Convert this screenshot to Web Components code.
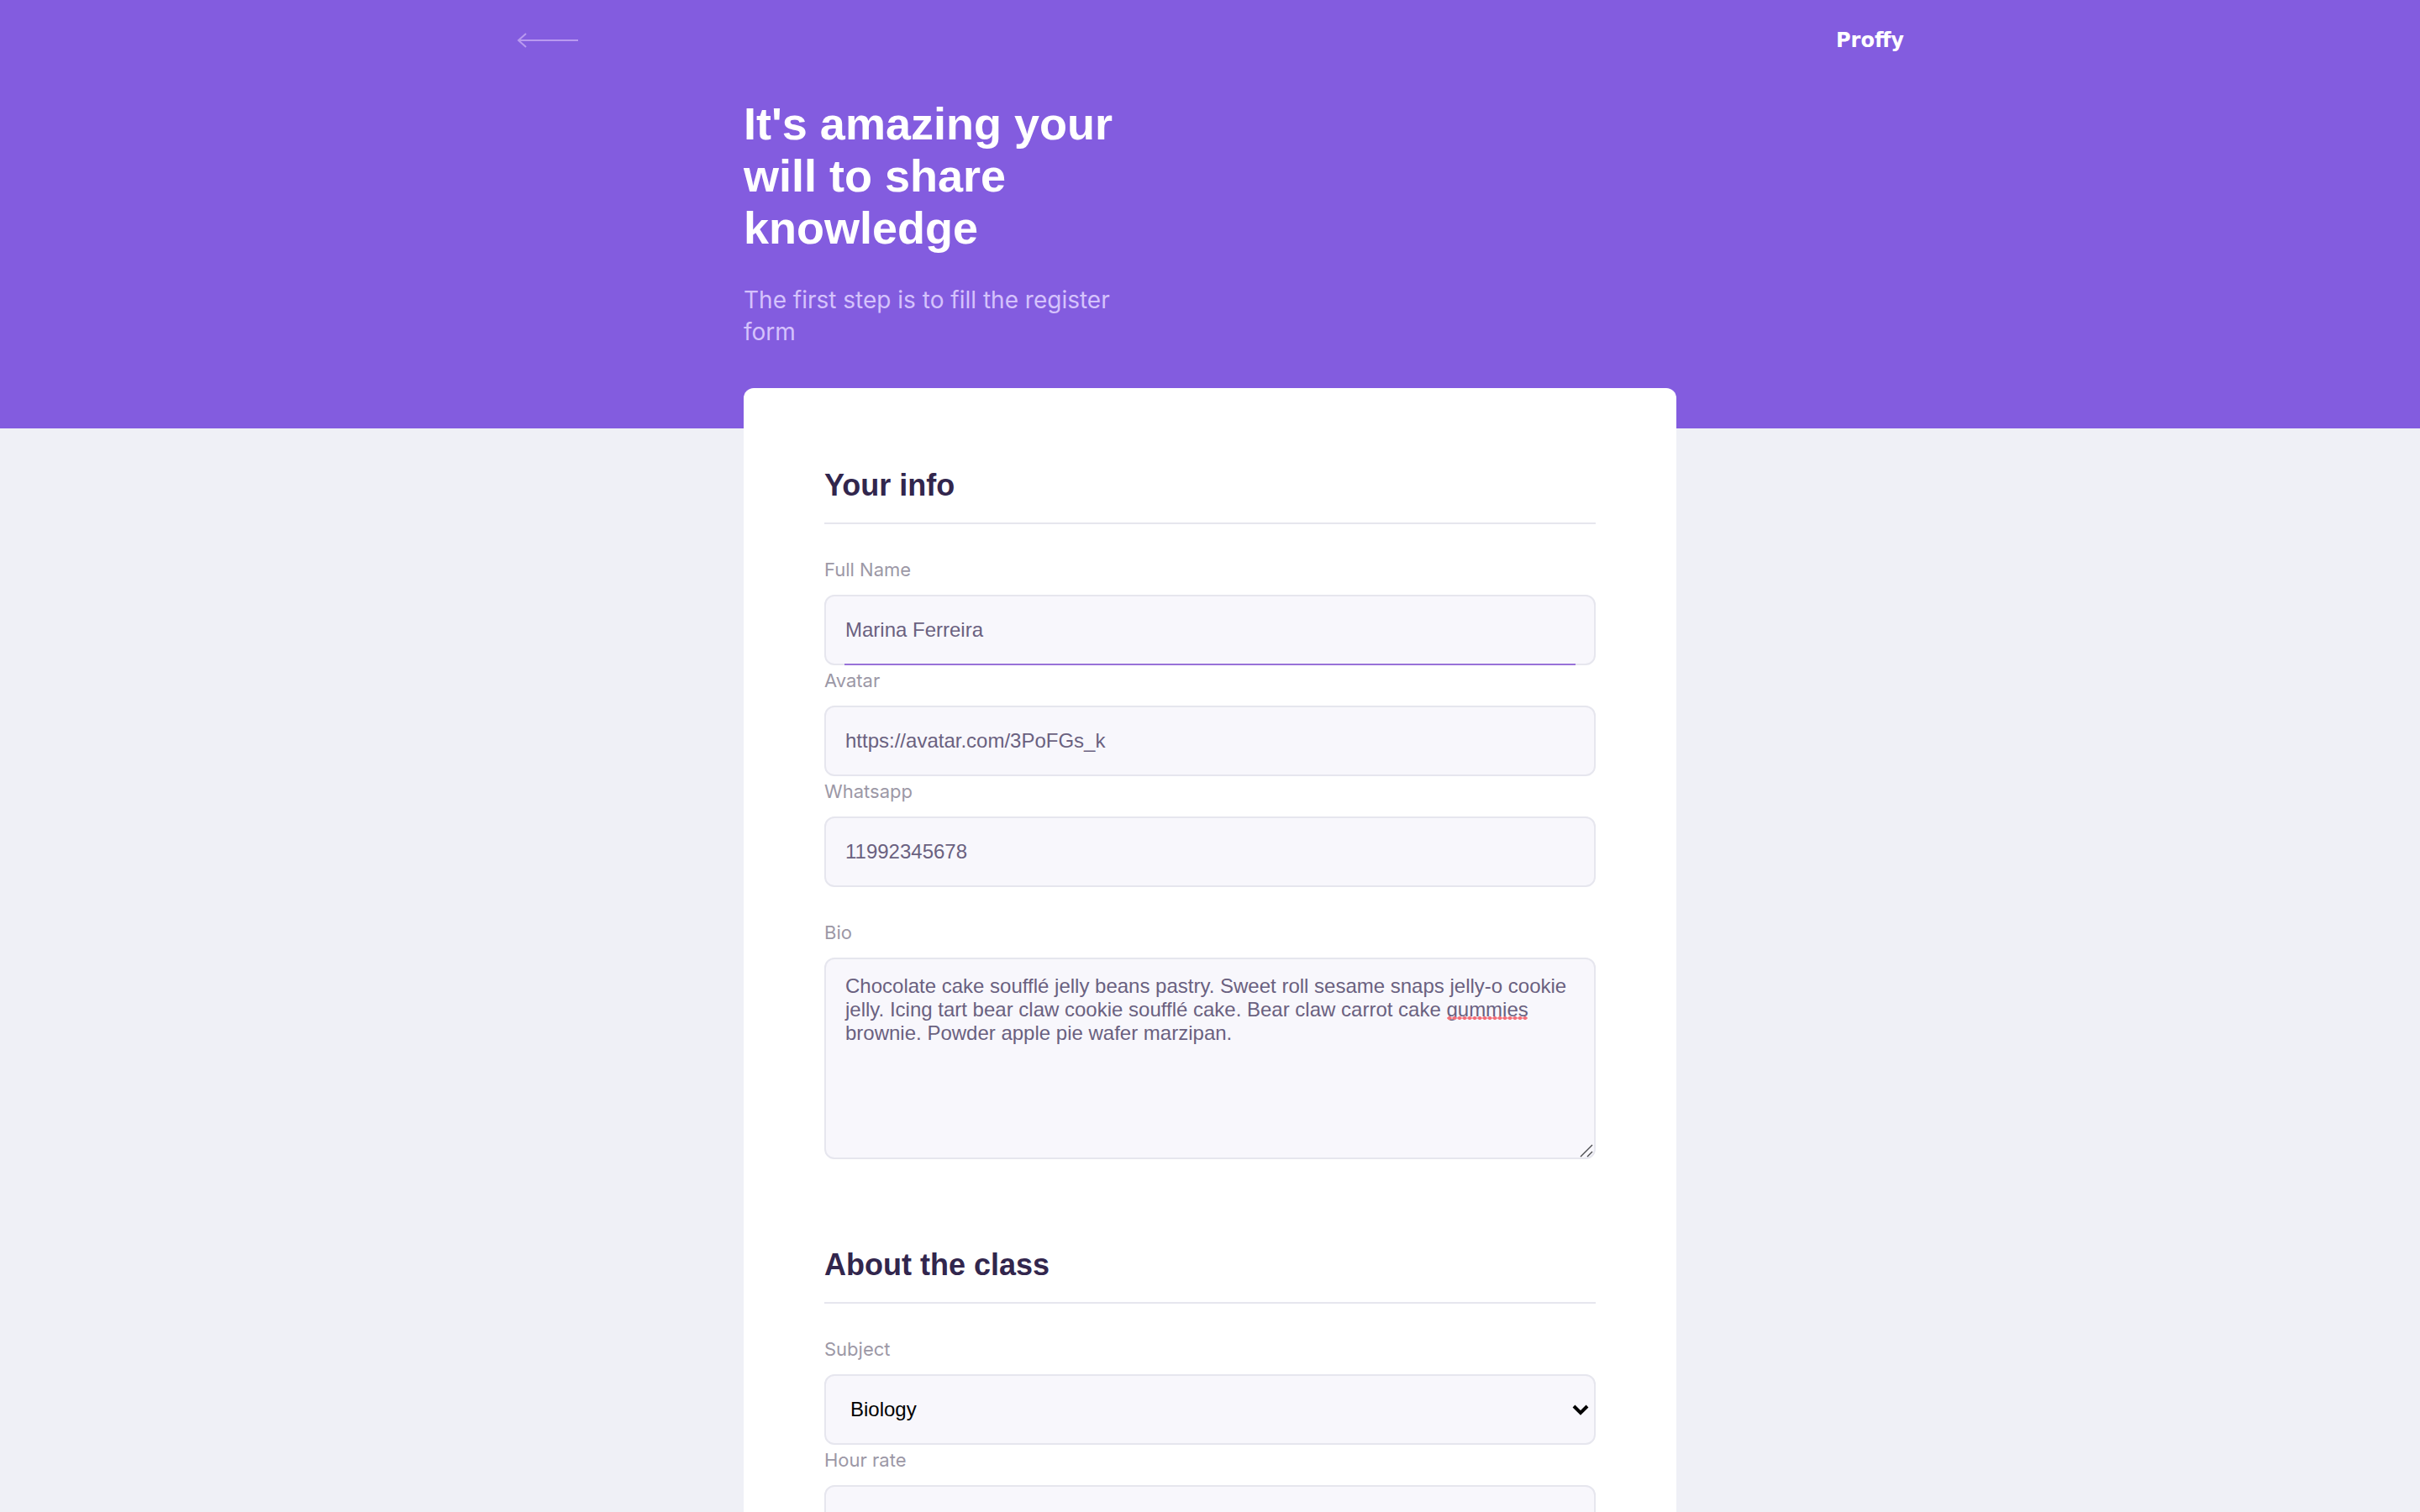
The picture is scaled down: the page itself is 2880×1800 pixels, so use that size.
<!DOCTYPE html>
<html lang="en">
<head>
<meta charset="utf-8">
<title>Proffy</title>
<style>
  html { scrollbar-width: none; }
  body {
    margin: 0;
    background: #eff0f6;
    --primary: #835cdf;
    --primary-light: #9872d8;
    --on-primary-text: #d5c2fc;
    --title: #32264d;
    --text: #6a6180;
    --label: #9c98a6;
    --line: #e6e6ee;
    --field: #f8f7fc;
    --display: "Liberation Sans", Arial, sans-serif;
    --body: "Inter", sans-serif;
    font-family: var(--display);
  }
</style>
</head>
<body>
<proffy-page>
  <page-header slot="header" heading="It's amazing your will to share knowledge" description="The first step is to fill the register form"></page-header>
  <form-section heading="Your info">
    <field-group>
      <text-field label="Full Name" value="Marina Ferreira" active></text-field>
      <text-field label="Avatar" value="https://avatar.com/3PoFGs_k"></text-field>
      <text-field label="Whatsapp" value="11992345678"></text-field>
    </field-group>
    <text-area label="Bio" value="Chocolate cake soufflé jelly beans pastry. Sweet roll sesame snaps jelly-o cookie jelly. Icing tart bear claw cookie soufflé cake. Bear claw carrot cake gummies brownie. Powder apple pie wafer marzipan."></text-area>
  </form-section>
  <form-section heading="About the class">
    <field-group>
      <select-field label="Subject" value="Biology"></select-field>
      <text-field label="Hour rate" value=""></text-field>
    </field-group>
  </form-section>
</proffy-page>

<script>
const fieldStyles = `
  :host { display: block; }
  * { box-sizing: border-box; }
  .field { display: flex; flex-direction: column; gap: 12px; }
  label { font: 400 22px/36px var(--body); color: var(--label); }
  .box { position: relative; display: flex; }
  input, textarea, select {
    width: 100%;
    margin: 0;
    border: 2px solid var(--line);
    border-radius: 12px;
    background: var(--field);
    color: var(--text);
    font: 400 24px/28px var(--display);
    outline: 0;
  }
  input, select { height: 84px; padding: 0 23px; }
`;

class Base extends HTMLElement {
  constructor() {
    super();
    this.attachShadow({ mode: "open" });
  }
  connectedCallback() {
    this.shadowRoot.innerHTML = this.render();
  }
  attr(name) {
    return (this.getAttribute(name) || "").replace(/&/g, "&amp;").replace(/"/g, "&quot;").replace(/</g, "&lt;");
  }
}

customElements.define("proffy-page", class extends Base {
  render() {
    return `<style>
      :host { display: block; }
      form {
        box-sizing: border-box;
        position: relative;
        width: 100%;
        max-width: 1110px;
        margin: -48px auto 96px;
        padding: 96px;
        border-radius: 12px;
        background: #fff;
        display: flex;
        flex-direction: column;
        gap: 106px;
      }
    </style>
    <slot name="header"></slot>
    <main><form><slot></slot></form></main>`;
  }
});

customElements.define("page-header", class extends Base {
  render() {
    return `<style>
      :host { display: block; background: var(--primary); }
      .bar {
        display: flex;
        align-items: center;
        justify-content: space-between;
        max-width: 1652px;
        height: 96px;
        margin: 0 auto;
      }
      a { display: flex; }
      .logo { color: #fff; font: 700 24px/28px "DejaVu Sans", sans-serif; }
      .intro {
        max-width: 1110px;
        margin: 0 auto;
        padding: 20px 0 96px;
        display: flex;
        flex-direction: column;
        gap: 36px;
      }
      h1, p { margin: 0; max-width: 480px; }
      h1 { color: #fff; font: 700 54px/62px var(--display); }
      p { color: var(--on-primary-text); font: 400 28px/38px var(--body); }
    </style>
    <header>
      <div class="bar">
        <a href="#" aria-label="Back">
          <svg width="76" height="20" viewBox="0 0 76 20" fill="none" stroke="#b99af0" stroke-width="2"><path d="M74 10H3M12 2L3 10l9 8"/></svg>
        </a>
        <span class="logo">Proffy</span>
      </div>
      <div class="intro">
        <h1>${this.attr("heading")}</h1>
        <p>${this.attr("description")}</p>
      </div>
    </header>`;
  }
});

customElements.define("form-section", class extends Base {
  render() {
    return `<style>
      :host { display: block; }
      section { display: flex; flex-direction: column; gap: 36px; }
      h2 {
        margin: 0;
        padding-bottom: 24px;
        border-bottom: 2px solid var(--line);
        color: var(--title);
        font: 700 36px/40px var(--display);
      }
    </style>
    <section><h2>${this.attr("heading")}</h2><slot></slot></section>`;
  }
});

customElements.define("field-group", class extends Base {
  render() {
    return `<style>:host { display: flex; flex-direction: column; }</style><slot></slot>`;
  }
});

customElements.define("text-field", class extends Base {
  render() {
    return `<style>${fieldStyles}
      :host([active]) .box::after {
        content: "";
        position: absolute;
        left: 24px;
        right: 24px;
        bottom: 0;
        height: 2px;
        background: var(--primary-light);
      }
    </style>
    <div class="field">
      <label for="control">${this.attr("label")}</label>
      <div class="box"><input id="control" type="text" value="${this.attr("value")}"></div>
    </div>`;
  }
});

customElements.define("text-area", class extends Base {
  render() {
    return `<style>${fieldStyles}
      textarea { height: 240px; padding: 18px 23px; resize: none; }
      .misspelt {
        position: absolute;
        left: 741px;
        top: 70px;
        width: 96px;
        height: 4px;
        background: radial-gradient(ellipse 3px 2px at center, #f4707a 80%, transparent) 0 0 / 6px 4px;
        pointer-events: none;
      }
      svg { position: absolute; right: 3px; bottom: 2px; pointer-events: none; }
    </style>
    <div class="field">
      <label for="control">${this.attr("label")}</label>
      <div class="box">
        <textarea id="control" spellcheck="false">${this.attr("value")}</textarea>
        <span class="misspelt"></span>
        <svg width="16" height="16" viewBox="0 0 16 16" fill="none" stroke="#4a4a4e" stroke-width="1.4"><path d="M1 15L15 1M9 15l6-6"/></svg>
      </div>
    </div>`;
  }
});

customElements.define("select-field", class extends Base {
  render() {
    return `<style>${fieldStyles}
      select { appearance: none; padding: 0 29px; color: #000; }
      svg { position: absolute; right: 8px; top: 36px; pointer-events: none; }
    </style>
    <div class="field">
      <label for="control">${this.attr("label")}</label>
      <div class="box">
        <select id="control"><option selected>${this.attr("value")}</option></select>
        <svg width="20" height="14" viewBox="0 0 20 14" fill="none" stroke="#000" stroke-width="4"><path d="M2 2l8 8 8-8"/></svg>
      </div>
    </div>`;
  }
});
</script>
</body>
</html>
